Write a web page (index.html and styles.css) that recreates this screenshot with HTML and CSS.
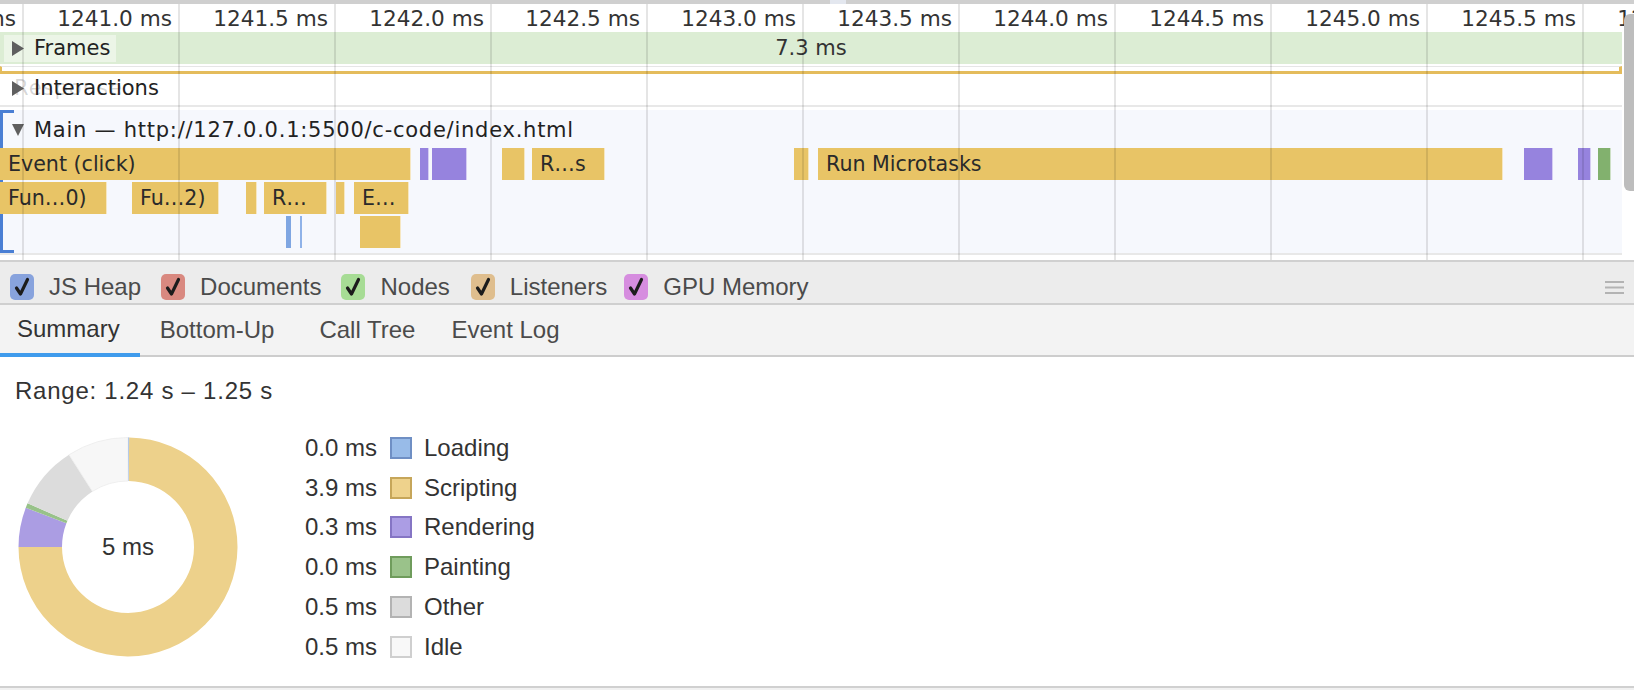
FILE: index.html
```
<!DOCTYPE html>
<html>
<head>
<meta charset="utf-8">
<title>Performance</title>
<link rel="stylesheet" href="styles.css">
</head>
<body>
<div class="timeline">
  <div class="overview-strip"><span class="ov-win"></span></div>
  <div class="ruler">
    <div class="tick">1240.5 ms</div>
    <div class="tick">1241.0 ms</div>
    <div class="tick">1241.5 ms</div>
    <div class="tick">1242.0 ms</div>
    <div class="tick">1242.5 ms</div>
    <div class="tick">1243.0 ms</div>
    <div class="tick">1243.5 ms</div>
    <div class="tick">1244.0 ms</div>
    <div class="tick">1244.5 ms</div>
    <div class="tick">1245.0 ms</div>
    <div class="tick">1245.5 ms</div>
    <div class="tick">1246.0 ms</div>
  </div>
  <div class="frames-track">
    <div class="track-label frames-label">
      <svg class="tri" width="12" height="15" viewBox="0 0 12 15"><polygon points="0,0 12,7.5 0,15" /></svg>
      <span>Frames</span>
    </div>
    <div class="frame-dur">7.3 ms</div>
  </div>
  <div class="frames-sel"><div class="sel-bracket"></div></div>
  <div class="interactions">
    <span class="ghost">Response</span>
    <div class="track-label">
      <svg class="tri" width="12" height="15" viewBox="0 0 12 15"><polygon points="0,0 12,7.5 0,15" /></svg>
      <span>Interactions</span>
    </div>
  </div>
  <div class="main-track">
    <div class="main-bracket"></div>
    <div class="track-label main-title">
      <svg class="tri" width="12" height="12" viewBox="0 0 12 12"><polygon points="0,0 12,0 6,12" /></svg>
      <span class="main-url">Main — http://127.0.0.1:5500/c-code/index.html</span>
    </div>
    <div class="flame-row first">
      <div class="bar" style="left:0px;width:411px">Event (click)</div>
      <div class="bar purple" style="left:420px;width:7px"></div>
      <div class="bar purple" style="left:432px;width:35px"></div>
      <div class="bar" style="left:502px;width:23px"></div>
      <div class="bar" style="left:532px;width:73px">R…s</div>
      <div class="bar" style="left:794px;width:15px"></div>
      <div class="bar" style="left:818px;width:685px">Run Microtasks</div>
      <div class="bar purple" style="left:1524px;width:29px"></div>
      <div class="bar purple" style="left:1578px;width:13px"></div>
      <div class="bar green" style="left:1598px;width:13px"></div>
    </div>
    <div class="flame-row">
      <div class="bar" style="left:0px;width:107px">Fun…0)</div>
      <div class="bar" style="left:132px;width:87px">Fu…2)</div>
      <div class="bar" style="left:246px;width:11px"></div>
      <div class="bar" style="left:264px;width:63px">R…</div>
      <div class="bar" style="left:336px;width:7px"></div>
      <div class="bar" style="left:354px;width:55px">E…</div>
    </div>
    <div class="flame-row">
      <div class="bar blue" style="left:286px;width:5px"></div>
      <div class="bar blue thin" style="left:300px;width:1.5px"></div>
      <div class="bar" style="left:360px;width:41px"></div>
    </div>
  </div>
  <div class="grid">
    <div class="grid-cell"></div><div class="grid-cell"></div><div class="grid-cell"></div>
    <div class="grid-cell"></div><div class="grid-cell"></div><div class="grid-cell"></div>
    <div class="grid-cell"></div><div class="grid-cell"></div><div class="grid-cell"></div>
    <div class="grid-cell"></div><div class="grid-cell"></div><div class="grid-cell"></div>
  </div>
  <div class="scroll-thumb"></div>
</div>

<div class="memory-bar">
  <label class="mem-item"><span class="cb cb-heap"><svg width="16" height="20" viewBox="0 0 16 20"><path d="M2.5 11 L6.5 17 L13.5 2.5" /></svg></span>JS Heap</label>
  <label class="mem-item mi-docs"><span class="cb cb-docs"><svg width="16" height="20" viewBox="0 0 16 20"><path d="M2.5 11 L6.5 17 L13.5 2.5" /></svg></span>Documents</label>
  <label class="mem-item mi-nodes"><span class="cb cb-nodes"><svg width="16" height="20" viewBox="0 0 16 20"><path d="M2.5 11 L6.5 17 L13.5 2.5" /></svg></span>Nodes</label>
  <label class="mem-item mi-listen"><span class="cb cb-listen"><svg width="16" height="20" viewBox="0 0 16 20"><path d="M2.5 11 L6.5 17 L13.5 2.5" /></svg></span>Listeners</label>
  <label class="mem-item"><span class="cb cb-gpu"><svg width="16" height="20" viewBox="0 0 16 20"><path d="M2.5 11 L6.5 17 L13.5 2.5" /></svg></span>GPU Memory</label>
  <svg class="hamburger" width="19" height="13" viewBox="0 0 19 13"><rect x="0" y="0" width="19" height="2"/><rect x="0" y="5.5" width="19" height="2"/><rect x="0" y="11" width="19" height="2"/></svg>
</div>

<div class="tabs">
  <div class="tab active">Summary</div>
  <div class="tab tab-bu">Bottom-Up</div>
  <div class="tab tab-ct">Call Tree</div>
  <div class="tab">Event Log</div>
</div>

<div class="summary">
  <div class="range">Range: 1.24 s – 1.25 s</div>
  <div class="summary-body">
    <div class="donut">
      <svg width="220" height="220" viewBox="0 0 220 220">
        <path class="seg-script" d="M 111.15 0.51 A 109.5 109.5 0 1 1 0.5 110 L 44 110 A 66 66 0 1 0 110.69 44.0 Z"/>
        <path class="seg-load" d="M 110 0.5 A 109.5 109.5 0 0 1 111.15 0.51 L 110.69 44 A 66 66 0 0 0 110 44 Z"/>
        <path class="seg-render" d="M 0.5 110 A 109.5 109.5 0 0 1 7.77 70.76 L 48.38 86.35 A 66 66 0 0 0 44 110 Z"/>
        <path class="seg-paint" d="M 7.77 70.76 A 109.5 109.5 0 0 1 9.58 66.34 L 49.47 83.68 A 66 66 0 0 0 48.38 86.35 Z"/>
        <path class="seg-other" d="M 9.58 66.34 A 109.5 109.5 0 0 1 51.0 17.75 L 74.44 54.39 A 66 66 0 0 0 49.47 83.68 Z"/>
        <path class="seg-idle" d="M 51.0 17.75 A 109.5 109.5 0 0 1 110 0.5 L 110 44 A 66 66 0 0 0 74.44 54.39 Z"/>
      </svg>
      <div class="donut-total">5 ms</div>
    </div>
    <div class="legend">
      <div class="legend-row"><span class="lv">0.0 ms</span><span class="sw sw-load"></span><span>Loading</span></div>
      <div class="legend-row"><span class="lv">3.9 ms</span><span class="sw sw-script"></span><span>Scripting</span></div>
      <div class="legend-row"><span class="lv">0.3 ms</span><span class="sw sw-render"></span><span>Rendering</span></div>
      <div class="legend-row"><span class="lv">0.0 ms</span><span class="sw sw-paint"></span><span>Painting</span></div>
      <div class="legend-row"><span class="lv">0.5 ms</span><span class="sw sw-other"></span><span>Other</span></div>
      <div class="legend-row"><span class="lv">0.5 ms</span><span class="sw sw-idle"></span><span>Idle</span></div>
    </div>
  </div>
</div>
<div class="footer"></div>
</body>
</html>
```

FILE: styles.css
```
html, body {
  margin: 0;
  padding: 0;
}
body {
  width: 1634px;
  height: 690px;
  overflow: hidden;
  background: #ffffff;
  font-family: "DejaVu Sans", "Liberation Sans", sans-serif;
  color: #333333;
}

/* ---------- timeline ---------- */
.timeline {
  position: relative;
  height: 260px;
  overflow: hidden;
}
.overview-strip {
  height: 4px;
  background: #cfcfcf;
  display: flex;
}
.ov-win {
  width: 16px;
  margin-left: 830px;
  background: #e3e7ef;
}
.ruler {
  height: 28px;
  display: flex;
  margin-left: -132px;
}
.tick {
  flex: 0 0 156px;
  box-sizing: border-box;
  padding-right: 8px;
  text-align: right;
  font-size: 21.6px;
  line-height: 30px;
  color: #333;
  white-space: nowrap;
}
.track-label {
  display: flex;
  align-items: center;
  gap: 10px;
  font-size: 21px;
  color: #222;
  white-space: nowrap;
}
.tri {
  fill: #5f5f5f;
  flex: none;
}
.frames-track {
  width: 1622px;
  height: 32px;
  background: #dcedd4;
  display: grid;
  align-items: center;
}
.frames-track > * {
  grid-area: 1 / 1;
}
.frames-label {
  justify-self: start;
  margin-left: 4px;
  height: 27px;
  padding: 0 6px 0 8px;
  background: rgba(255, 255, 255, 0.45);
}
.frame-dur {
  justify-self: center;
  font-size: 21px;
  color: #333;
}
.frames-sel {
  width: 1622px;
  height: 12px;
  box-sizing: border-box;
  padding-top: 2px;
}
.sel-bracket {
  height: 8px;
  box-sizing: border-box;
  border-top: 1px solid #e6e6e6;
  border-left: 2px solid #e4bc5c;
  border-right: 3px solid #e4bc5c;
  border-bottom: 3px solid #e4bc5c;
}
.interactions {
  width: 1622px;
  height: 29px;
  border-bottom: 2px solid #e8e8e8;
  margin-bottom: 3px;
  display: grid;
  align-items: start;
}
.interactions > * {
  grid-area: 1 / 1;
  line-height: 24px;
  height: 24px;
}
.interactions .track-label {
  padding-left: 12px;
}
.ghost {
  margin-left: 14px;
  font-size: 21px;
  color: rgba(0, 0, 0, 0.17);
  letter-spacing: 1px;
}
.main-track {
  position: relative;
  width: 1622px;
  height: 143px;
  background: #f6f8fd;
  border-bottom: 2px solid #e8e8e8;
}
.main-bracket {
  position: absolute;
  left: 0;
  top: 0;
  width: 14px;
  height: 143px;
  box-sizing: border-box;
  border: 3px solid #4a7fd4;
  border-right: none;
}
.main-title {
  height: 34px;
  padding-left: 12px;
  padding-top: 3px;
}
.main-url {
  letter-spacing: 0.75px;
}
.flame-row {
  position: relative;
  height: 32px;
  margin-top: 2px;
}
.flame-row.first {
  margin-top: 1px;
}
.bar {
  position: absolute;
  top: 0;
  height: 32px;
  box-sizing: border-box;
  padding-left: 8px;
  background: #e8c466;
  border-right: 1px solid rgba(255, 255, 255, 0.6);
  font-size: 20.6px;
  line-height: 32px;
  color: #2a2a2a;
  white-space: nowrap;
  overflow: hidden;
}
.bar.purple { background: #9683de; }
.bar.green { background: #82b16e; }
.bar.blue { background: #7fa6e2; border-right: none; padding: 0; }
.bar.thin { background: #8fb2e8; }

.grid {
  position: absolute;
  top: 4px;
  left: -132px;
  height: 256px;
  display: flex;
  pointer-events: none;
}
.grid-cell {
  flex: 0 0 156px;
  box-sizing: border-box;
  border-right: 2px solid rgba(0, 0, 0, 0.1);
}
.scroll-thumb {
  position: absolute;
  right: 0;
  top: 14px;
  width: 10px;
  height: 177px;
  background: #bdbdbd;
  border-radius: 6px 0 0 6px;
}

/* ---------- memory counters ---------- */
.memory-bar {
  box-sizing: content-box;
  height: 32px;
  padding: 9px 10px 0 10px;
  background: #ececec;
  border-top: 2px solid #d0d0d0;
  border-bottom: 2px solid #cfcfcf;
  display: flex;
  align-items: center;
  font-family: "Liberation Sans", Arial, sans-serif;
}
.mem-item {
  display: flex;
  align-items: center;
  margin-right: 20px;
  font-size: 24px;
  color: #4b4b4b;
}
.mi-docs { margin-right: 20px; }
.mi-nodes { margin-right: 21px; }
.mi-listen { margin-right: 17px; }
.cb {
  width: 24px;
  height: 26px;
  border-radius: 5px;
  margin-right: 15px;
  display: flex;
  align-items: center;
  justify-content: center;
}
.cb path {
  fill: none;
  stroke: #1c1c1c;
  stroke-width: 3.2;
  stroke-linecap: round;
  stroke-linejoin: round;
}
.cb-heap { background: #88a3dd; }
.cb-docs { background: #d98980; }
.cb-nodes { background: #a7dc95; }
.cb-listen { background: #dfbe8e; }
.cb-gpu { background: #d68ddf; }
.hamburger {
  margin-left: auto;
  fill: #b3b3b3;
}

/* ---------- tabs ---------- */
.tabs {
  height: 50px;
  background: #f3f3f3;
  border-bottom: 2px solid #cdcdcd;
  display: flex;
  font-family: "Liberation Sans", Arial, sans-serif;
}
.tab {
  padding: 0 20px;
  font-size: 24px;
  line-height: 50px;
  color: #4b4b4b;
}
.tab-bu { padding-right: 25px; }
.tab-ct { padding-right: 16px; }
.tab.active {
  padding-left: 17px;
  color: #333;
  margin-bottom: -2px;
  border-bottom: 4px solid #3f9bec;
  line-height: 48px;
}

/* ---------- summary ---------- */
.summary {
  height: 329px;
  box-sizing: border-box;
  padding: 19px 0 0 15px;
  font-family: "Liberation Sans", Arial, sans-serif;
  color: #333;
}
.range {
  font-size: 24px;
  line-height: 30px;
  letter-spacing: 0.75px;
}
.summary-body {
  display: flex;
  align-items: flex-start;
  margin-top: 22px;
}
.donut {
  margin: 9px 0 0 3px;
  width: 220px;
  height: 220px;
  display: grid;
  place-items: center;
}
.donut > * {
  grid-area: 1 / 1;
}
.donut-total {
  font-size: 24px;
  color: #333;
}
.seg-script { fill: #edd18b; }
.seg-load { fill: #8fb2e6; }
.seg-render { fill: #ab9de3; }
.seg-paint { fill: #98c289; }
.seg-other { fill: #dcdcdc; }
.seg-idle { fill: #f7f7f7; stroke: #ececec; stroke-width: 0.8; }

.legend {
  margin-left: 59px;
  display: flex;
  flex-direction: column;
}
.legend-row {
  display: flex;
  align-items: center;
  height: 39.8px;
  font-size: 24px;
  color: #333;
}
.lv {
  width: 80px;
  text-align: right;
}
.sw {
  width: 22px;
  height: 22px;
  box-sizing: border-box;
  border: 2px solid;
  margin: 0 12px 0 13px;
}
.sw-load { background: #98bbe8; border-color: #6f8fc4; }
.sw-script { background: #eed28c; border-color: #c6a65a; }
.sw-render { background: #ab9de4; border-color: #8575c4; }
.sw-paint { background: #9ac28a; border-color: #6f9c5c; }
.sw-other { background: #dcdcdc; border-color: #b3b3b3; }
.sw-idle { background: #f8f8f8; border-color: #cfcfcf; }

.footer {
  height: 2px;
  border-top: 2px solid #d0d0d0;
  background: #f1f1f1;
}
```
